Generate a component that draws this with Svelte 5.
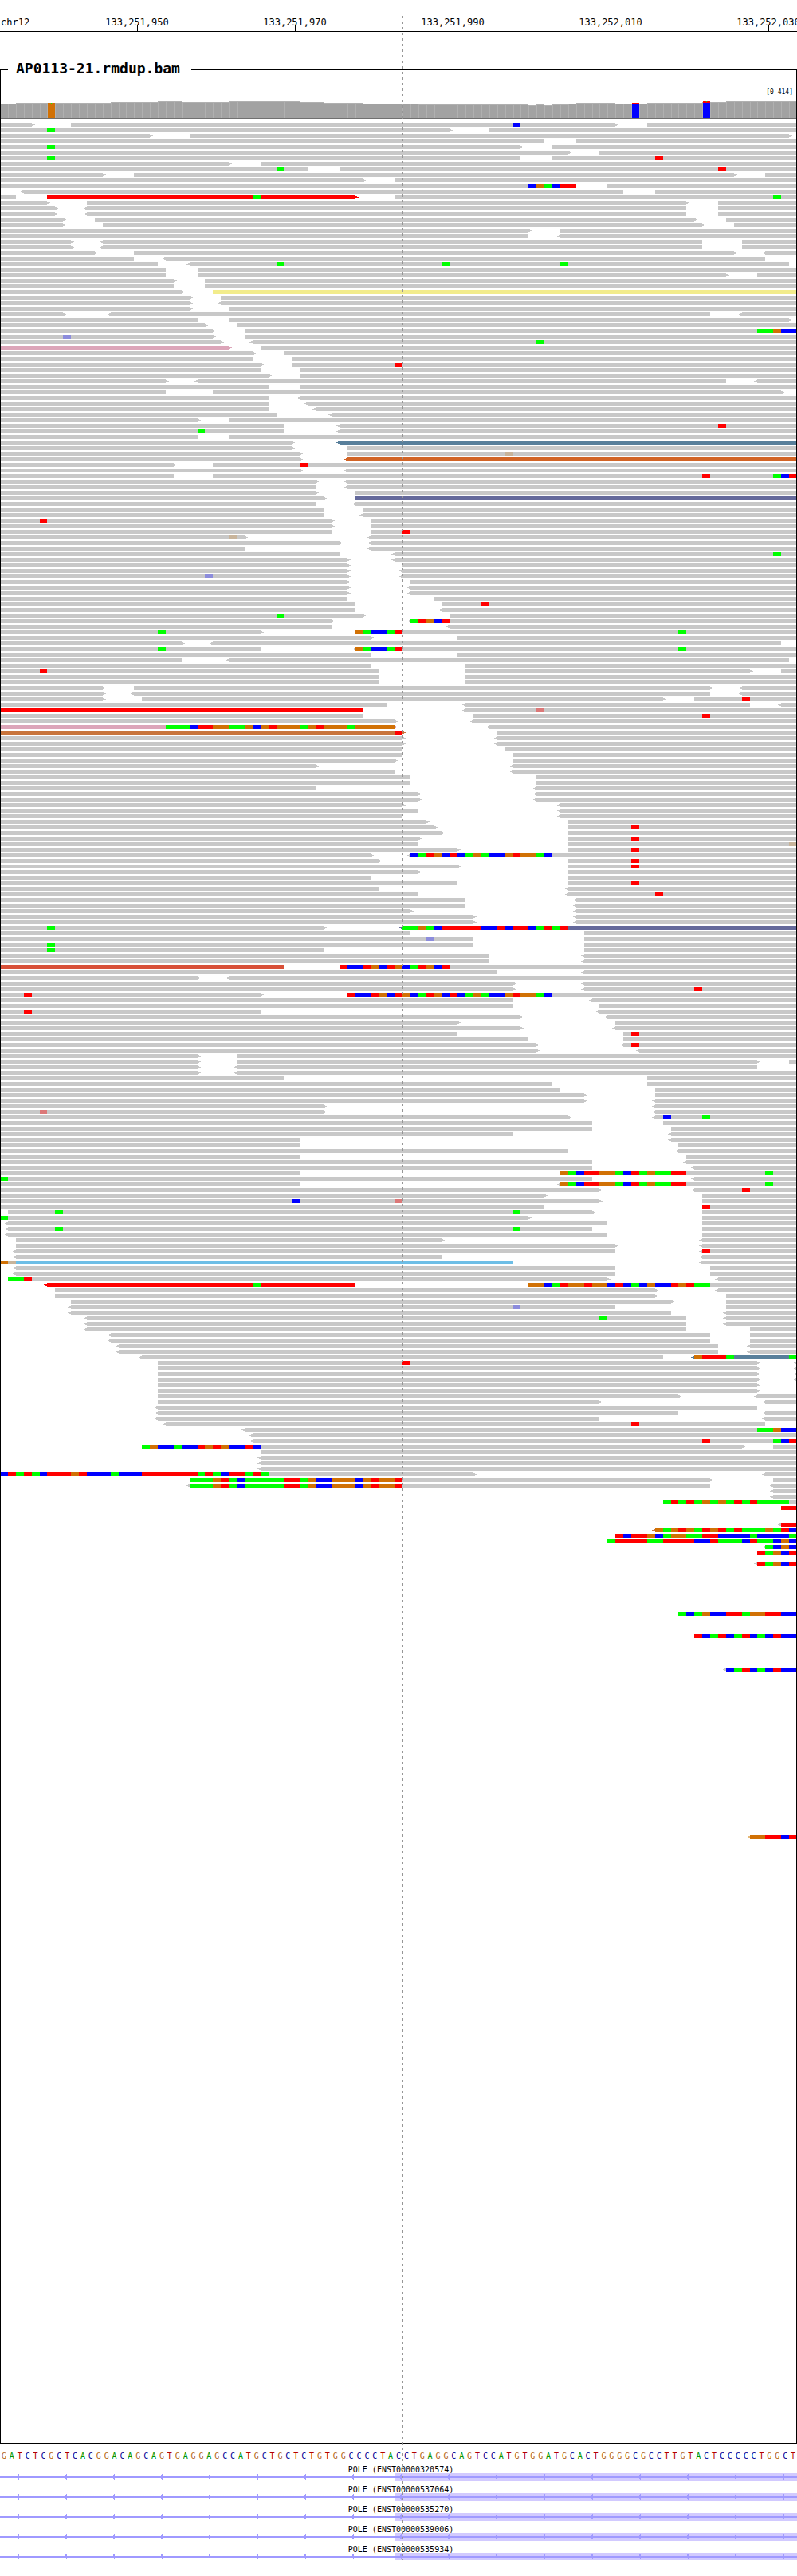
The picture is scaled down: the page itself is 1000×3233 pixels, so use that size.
<script>
  const BASES = 101;
  const SPAN = 1000;
  const ROW = 7;
  const SLOTS = 416;
  const px = (k) => Math.round((k * SPAN) / BASES);
  const pct = (x) => `${x / 10}%`;

  const baseColor = {
    A: '#00ff00', T: '#ff0000', G: '#d17105', C: '#0000ff',
    a: '#78dc78', t: '#dc7878', g: '#c8b49b', c: '#8c8cdc'
  };
  const readColor = {
    red: '#ff0000', yellow: '#f2ec8c', pink: '#dca5b9', steel: '#587f9b', orange: '#d26426',
    purple: '#64699b', brown: '#c8743c', tomato: '#d85038', sky: '#6ebee6', sand: '#e6b978'
  };

  // One line per alignment row. "<a-b>" is a read over bases a..b with an arrow
  // on the marked side, "#name" tints it, and "k:SEQ" lists mismatches from base k.
  const alignments = `0-4> 9-78> 82-101 65:C
0-57> 62-101 6:A
0-19> 24-100>
0-69 73-101
0-66> 70-101 6:A
0-72> 76-101
0-66 70-101 6:A 83:T
0-29> 33-101
0-39 43-101 35:A 91:T
0-13> 17-93> 97-101
0-46> 50-101
0-73 77-101 67:CGACTT
<3-79 83-101
0-2 6-45>#red 50-101 32:A 98:A
0-6> 11-87> 91-101
0-7> <11-87 91-101
0-7> <11-87 91-101
0-8> 12-88> 92-101
0-8> 13-89> 93-101
0-67> 71-101
0-67 <71-101
0-9> <13-89 94-101
0-9> <13-89 94-101
0-12> 17-93> <97-101
0-17 <21-97
0-20 <24-100 35:A 56:A 71:A
0-21 25-101
0-21 25-92> 96-101
0-22> 26-101
0-22 26-101
0-23> 27-101#yellow
0-24> 28-101
0-24> <28-101
0-24> 29-101
0-8> <14-90 <94-101
0-25 29-100>
0-26> 30-101
0-27> 31-101 96:AAGCC
0-27> 31-101 8:c
0-28> <32-101 68:A
0-29>#pink 33-101
0-32> 36-101
0-32 37-101
0-33> 37-101 50:T
0-33 38-101
0-34> 38-101
0-21> <25-92 <96-101
0-34 38-101
0-21 27-99>
0-34 <38-101
0-34 <39-101
0-34 <40-101
0-35 <42-101
0-25> 29-101
0-36 <43-101 91:T
0-36 <43-101 25:A
0-25 29-101
0-37> <43-101#steel
0-37> 44-101
0-38> 44-101 64:g
0-38> <44-101#orange
0-22> 27-101 38:T
0-38> <44-101
0-22 27-101 89:T 98:ACT
0-40> <44-101
0-40 <44-101
0-40> 45-101
0-41> 45-101#purple
0-40 <45-101
0-41 46-101
0-41 <46-101
0-42> 47-101 5:T
0-42> 47-101
0-42 47-101 51:T
0-31> <47-101 29:g
0-43> <47-101
0-31 <47-101
0-43 <50-101 98:A
0-44> <50-101
0-44> 51-101
0-44> <51-101
0-44> <51-101 26:c
0-44> 52-101
0-44> <52-101
0-44> <52-101
0-44 55-101
0-45 56-101 61:T
0-45 <56-101
0-46> 57-101 35:A
0-42> <52-101 52:ATGCT
0-42 <57-101
0-33> 45-101 20:A 45:GACCAT 86:A
0-47> 58-101
0-23> <27-99
0-33 <45-101 20:A 45:GACCAT 86:A
0-47 58-101
0-23 <29-100
0-47 59-101
0-48 59-95> 99-101 5:T
0-48 59-101
0-48 59-101
0-13> 17-90> <94-101
0-13> <17-90 <94-101
0-13> 18-84> 88-101 94:T
0-49 <59-95 <99-101
0-46#red <59-101 68:t
0-46 60-101 89:T
0-50> <60-101
0-50>#pink <62-101 21:AAACTTGGAAGCGTGGGAGTGGGAGGGGG
0-51>#brown 63-101 50:T
0-51> <63-101
0-51> <63-101
0-51 64-101
0-51 65-101
0-50> 65-101
0-40> <65-101
0-50 <65-101
0-52 68-101
0-52 68-101
0-40 <68-101
0-53> <68-101
0-53> <68-101
0-51> <71-101
0-53 <71-101
0-51 <71-101
0-54> 72-101
0-55> 72-101 80:T
0-56> 72-101
0-53> 72-101 80:T
0-53 72-101 100:g
0-58> 72-101 80:T
0-47> <52-101 52:CATGCTCAGACCGTGGAC
0-48> 72-101 80:T
0-58> 72-101 80:T
0-53> 72-101
0-47 72-101
0-58 72-101 80:T
0-48 <72-101
0-53 <72-101 83:T
0-59 <73-101
0-59 <73-101
0-52> <73-101
0-60> <73-101
0-60> <73-101
0-41> <51-101#purple 6:A 51:AAGACTTTTTCCTCTTCATAT
0-52 74-101
0-60 74-101 54:c
0-60 74-101 6:A
0-41 74-101 6:A
0-62 <74-101
0-62 <74-101
0-36#tomato 43-101 43:TCCTGCTGCATGCT
0-63 <74-101
0-25> <29-101
0-65> <74-101
0-65> <74-101 88:T
0-33> 44-101 3:T 44:TCCTGCTGCATGCTCAGACCGTGGAC
0-65 <75-101
0-65 76-101
0-33 <76-101 3:T
0-66> <77-101
0-58> 78-101
0-66> <78-101
0-58 79-101 80:T
0-67 79-101
0-68> <79-101 80:T
0-68> <81-101
0-25> 30-101
0-25> 30-96> 100-101
0-25> <30-96
0-25> <30-101
0-36 82-101
0-70 82-101
0-71 83-101
0-74> 83-101
0-74> <83-101
0-41> <83-101
0-41> <83-101 5:t
0-72> <83-101 84:C 89:A
0-75 84-101
0-75 85-101
0-65 <85-101
0-38 <85-101
0-38 86-101
0-72 <86-101
0-38 87-101
0-75 <87-101
0-75 <88-101
0-38 71-101 71:GACTTGGACTAGAATT 97:A
0-75 <88-101 0:A
0-38 <71-101 71:GACTTGGACTAGAATT 97:A
0-76> <88-101 94:T
0-69> 89-101
0-76> 89-101 37:C 50:t
0-69 89-101 89:T
1-75> 89-101 7:A 65:A
0-67> 89-101 0:A
<1-77 89-101
<1-75 89-101 7:A 65:A
<1-77 89-101
2-56> <89-101
2-78> <89-101
<2-78 <89-101 89:T
<2-56 <89-101
0-65#sky <89-101 0:Gg
<2-78 90-101
<2-78 90-101
1-77> <91-101 1:AAT
<6-45#red 67-101 32:A 67:GGCATGGTGGCTCACGCCTGTAA
7-83> <91-101
7-83> 92-101
9-85> 92-101
<9-78 92-101 65:c
<9-85 <92-101
<11-87 <92-101 76:A
<11-87 <92-101
<11-87 95-101
<14-90 95-101
<14-90 95-101
<15-91 <95-101
<15-91 <95-101
<18-84 <88-101#steel 88:GTTTA 100:A
20-96> <101-101 51:T
20-96> <101-101
20-96> <101-101
20-96> <101-101
20-96>
20-96>
20-86> <96-101
20-76> <97-101
<20-96
<20-86 <97-101
<20-76 <97-101
<21-97 80:T
<31-101 96:AAGCC
<32-101
<32-101 89:T 98:ACT
18-94> 98-101 18:AGCCACCTGTGCCTC
33-101
<33-101
<33-101
<33-101
0-60> <97-101 0:CTATACTTTGTCCCACCCTTTTTTTATACTTATA
24-90> 98-101 24:AAAGTACAAAAATTAGCCGGGCGTGGT
<24-90 <98-101 24:AAAGTACAAAAATTAGCCGGGCGTGGT
<98-101
<98-101
84-101 84:ATATAGAGATATAAAA
99-101 99:TT


<99-101 99:TT
<83-101#brown 83:GAGTGATGTATAAAGATC
78-101 78:TCTTGCAGGAATTCCCCACCCCA
77-101 77:ATTTTAATTTTCCTAAACTAACGC
<97-101 97:ACGC
96-101 96:TAGCT

<96-101 96:TAGCT








86-101 86:ACAGCCTTAGGTTCC



88-101 88:TCATCATCACTCC





<92-101 92:CATCACTCC





























<95-101#sand 95:GGTTCT`;

  const reads = [];
  const mismatches = [];
  alignments.split('\n').forEach((line, row) => {
    const y = 5 + row * ROW;
    for (const part of line.split(' ').filter(Boolean)) {
      if (part.includes(':')) {
        const [start, seq] = part.split(':');
        [...seq].forEach((base, i) => {
          const a = px(+start + i);
          mismatches.push({ x: a, w: px(+start + i + 1) - a, y, fill: baseColor[base] });
        });
      } else {
        const [, left, a, b, right, tint] = part.match(/^(<?)(\d+)-(\d+)(>?)#?(\w*)$/);
        const x1 = px(+a);
        const x2 = px(+b);
        let d = `M${x1} ${y}H${x2}v5H${x1}z`;
        if (left) d += `M${x1} ${y + 1}v3h-2v-1h-2v-1h2v-1z`;
        if (right) d += `M${x2} ${y + 1}h2v1h2v1h-2v1h-2z`;
        reads.push({ d, fill: readColor[tint] ?? '#c8c8c8' });
      }
    }
  });

  // Coverage heights as [first base, bar height].
  const steps = [
    [0, 18], [2, 19], [14, 20], [20, 21], [23, 20], [29, 21], [38, 20], [41, 19], [46, 18],
    [53, 17], [67, 16], [68, 17], [69, 16], [70, 17], [72, 18], [73, 19], [78, 18], [82, 19],
    [89, 20], [92, 21]
  ];
  const coverage = Array.from({ length: BASES }, (_, k) => {
    const h = steps.filter(([from]) => from <= k).at(-1)[1];
    return { x: px(k), w: px(k + 1) - px(k), h };
  });
  const variants = [
    { k: 6, y: 9, h: 19, fill: '#d17105' },
    { k: 80, y: 11, h: 17, fill: '#0000ff' },
    { k: 80, y: 9, h: 2, fill: '#ff0000' },
    { k: 89, y: 9, h: 19, fill: '#0000ff' },
    { k: 89, y: 7, h: 2, fill: '#ff0000' }
  ];

  const ticks = [
    { x: 172, label: '133,251,950' },
    { x: 370, label: '133,251,970' },
    { x: 568, label: '133,251,990' },
    { x: 766, label: '133,252,010' },
    { x: 964, label: '133,252,030' }
  ];

  const sequence =
    'GATCTCGCTCACGGACAGCAGTGAGGAGCCATGCTGCTCTGTGGCCCCTA' +
    'CCTGAGGCAGTCCATGTGGATGCACTGGGGCGCCTTGTACTCCCCCTGGCT';

  const transcripts = [
    'ENST00000320574', 'ENST00000537064', 'ENST00000535270', 'ENST00000539006', 'ENST00000535934'
  ];
  const chevrons = Array.from({ length: 17 }, (_, i) => 21 + i * 60);
</script>

<main class="browser">
  <svg class="ruler" role="img" aria-label="Genomic coordinates on chr12">
    <text x="1" y="32">chr12</text>
    {#each ticks as t}
      <text class="mid" x={pct(t.x)} y="32">{t.label}</text>
      <rect x={pct(t.x)} y="32" width="1" height="7" />
    {/each}
    <rect y="39" width="100%" height="1" />
  </svg>

  <fieldset class="track">
    <legend>AP0113-21.rmdup.bam</legend>
    <div class="range">[0-414]</div>
    <svg class="coverage" viewBox="1 0 998 29" preserveAspectRatio="none">
      {#each coverage as c}
        <rect x={c.x} y={28 - c.h} width={c.w} height={c.h} fill="#b0b0b0" />
        <rect x={c.x + 1} y={29 - c.h} width={c.w - 1} height={c.h - 1} fill="#a2a2a2" />
      {/each}
      {#each variants as v}
        <rect x={px(v.k) + 1} y={v.y} width="9" height={v.h} fill={v.fill} />
      {/each}
      <rect x="64" y="9" width="1" height="1" fill="#00ff00" />
      <rect x="886" y="7" width="1" height="1" fill="#00ff00" />
      <rect x="0" y="28" width="1000" height="1" fill="#707070" />
    </svg>
    <svg class="reads" viewBox="1 0 998 {5 + SLOTS * ROW}" preserveAspectRatio="none">
      {#each reads as r}
        <path d={r.d} fill={r.fill} />
      {/each}
      {#each mismatches as m}
        <rect x={m.x} y={m.y} width={m.w} height="5" fill={m.fill} />
      {/each}
    </svg>
  </fieldset>

  <div class="sequence">
    {#each sequence as base}
      <span class={base}>{base}</span>
    {/each}
  </div>

  <section class="genes">
    {#each transcripts as id, i}
      <div class="gene">
        <div class="name">POLE ({id})</div>
        <svg class="model">
          <rect class="exon" x="49.5%" y="0" width="50.5%" height={i === 4 ? 9 : 10} />
          <rect class="strand" x="0" y="4" width="100%" height="2" />
          {#each chevrons as c}
            <svg class="chevron" x={pct(c)} width="3" height="8">
              <path d="M0 4h1v-2h1v-1h1v7h-1v-1h-1v-2h-1z" />
            </svg>
          {/each}
        </svg>
      </div>
    {/each}
  </section>

  <div class="guide start"></div>
  <div class="guide end"></div>
</main>

<style>
  :global(body) {
    margin: 0;
    background: #fff;
  }
  .browser {
    position: relative;
    padding-bottom: 20px;
    overflow: hidden;
    color: #000;
    font-family: 'DejaVu Sans Mono', monospace;
  }
  svg {
    display: block;
    width: 100%;
    shape-rendering: crispEdges;
  }
  .ruler {
    height: 40px;
    font-size: 12px;
  }
  .mid {
    text-anchor: middle;
  }
  .track {
    min-width: 0;
    margin: 35px 0 10px;
    padding: 0;
    border: 1px solid #000;
  }
  legend {
    margin-left: 9px;
    padding: 0 14px 4px 10px;
    font-size: 18px;
    font-weight: bold;
    line-height: 21px;
  }
  .range {
    height: 10px;
    padding: 10px 4px 0 0;
    font-size: 8px;
    line-height: 11px;
    text-align: right;
  }
  .coverage {
    height: 29px;
  }
  .reads {
    height: 2917px;
  }
  .sequence {
    display: grid;
    grid-template-columns: repeat(101, minmax(0, 1fr));
    border-top: 1px solid #aaa;
    border-bottom: 1px solid #aaa;
    font-size: 10px;
    line-height: 9px;
    text-align: center;
  }
  .A { color: #009600; }
  .T { color: #b40000; }
  .G { color: #b46414; }
  .C { color: #000096; }
  .genes {
    padding-top: 6px;
  }
  .gene {
    height: 25px;
  }
  .gene:last-child {
    height: 19px;
  }
  .name {
    height: 10px;
    padding-left: 6px;
    font-size: 10px;
    line-height: 11px;
    text-align: center;
  }
  .model {
    height: 10px;
  }
  .exon {
    fill: #d2caff;
  }
  .strand,
  .chevron {
    fill: #a09aff;
  }
  .chevron {
    width: 3px;
  }
  .guide {
    position: absolute;
    top: 20px;
    bottom: 20px;
    width: 1px;
    background: repeating-linear-gradient(#969696 0 3px, transparent 3px 7px);
    pointer-events: none;
  }
  .start {
    left: 49.5%;
  }
  .end {
    left: 50.5%;
  }
</style>
